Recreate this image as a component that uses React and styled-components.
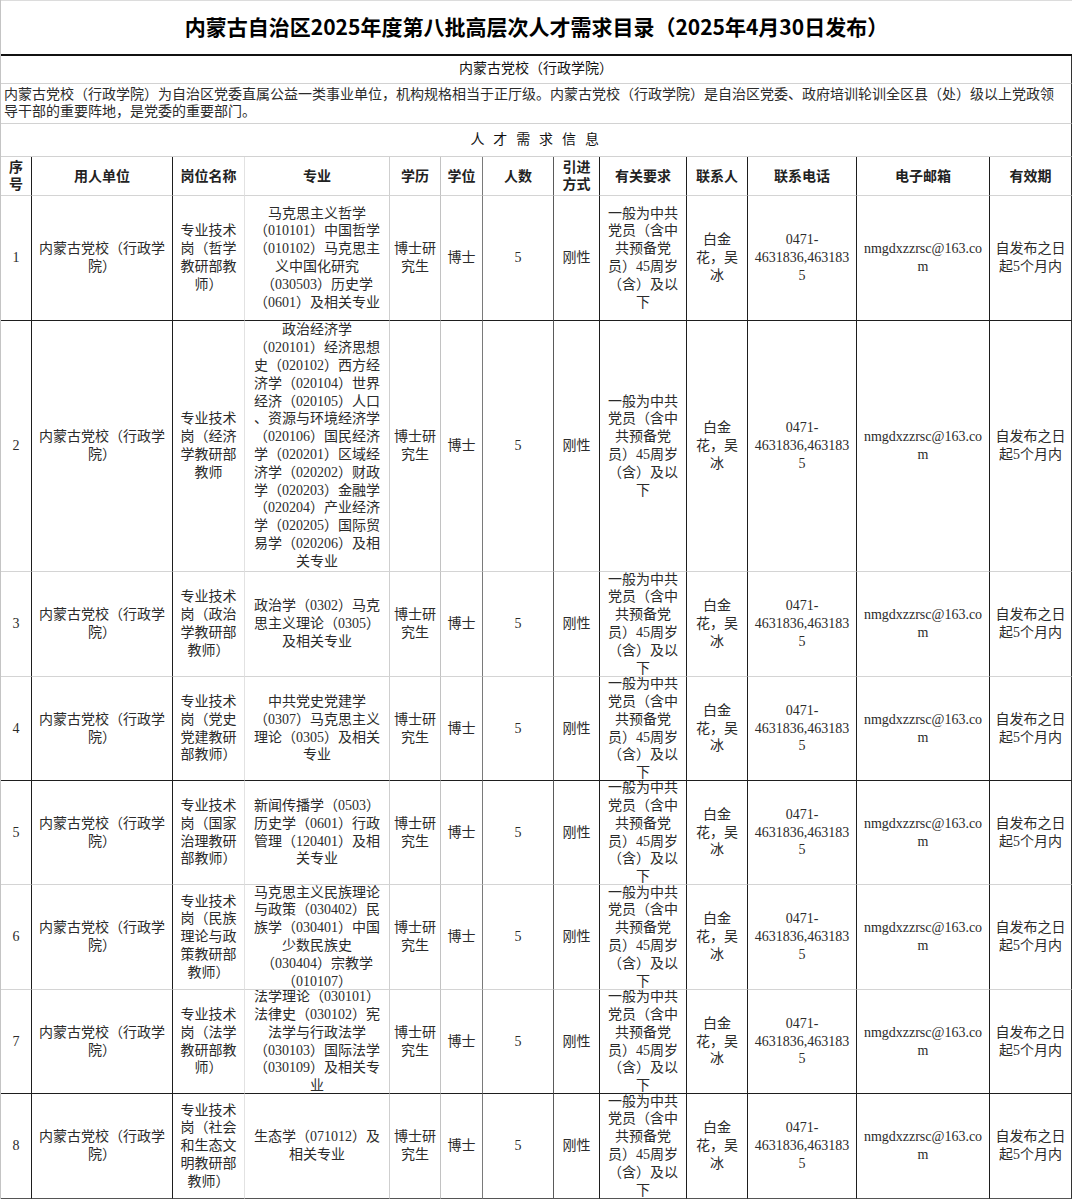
import React from 'react';
import styled, { createGlobalStyle } from 'styled-components';

const GlobalStyle = createGlobalStyle`
	body {
		margin: 0;
		background: #ffffff;
	}
	* {
		box-sizing: border-box;
	}
`;

const FONT = `"Liberation Serif", "Noto Sans CJK SC", serif`;

const Sheet = styled.div`
	width: 1072px;
	border-left: 1px solid #c4c4c4;
	font-family: ${FONT};
	font-size: 14px;
	color: #2b2b2b;
`;

const TitleRow = styled.div`
	height: 56px;
	display: flex;
	align-items: center;
	justify-content: center;
	padding-bottom: 3px;
	border-top: 1px solid #dcdcdc;
	border-bottom: 2px solid #111;
	font-family: "Noto Sans CJK SC", "Liberation Sans", sans-serif;
	font-weight: bold;
	font-size: 21px;
	color: #000;
`;

const Banner = styled.div`
	height: ${props => props.$h}px;
	display: flex;
	align-items: center;
	justify-content: ${props => (props.$left ? 'flex-start' : 'center')};
	padding: 0 ${props => (props.$left ? '3px' : '0')};
	border-right: 1px solid #333;
	border-bottom: 1px solid #d2d2d2;
	line-height: 16.5px;
	letter-spacing: ${props => props.$spacing || 0};
	color: ${props => (props.$dark ? '#111' : '#2b2b2b')};
	white-space: pre;
`;

const Grid = styled.div`
	display: grid;
	grid-template-columns: 31px 141px 72px 145px 51px 42px 71px 46px 87px 61px 109px 133px 82px;
	grid-template-rows: 39px 125px 251px 105px 104px 104px 105px 104px 105px;
`;

const Cell = styled.div`
	display: flex;
	align-items: center;
	justify-content: center;
	overflow: hidden;
	text-align: center;
	white-space: pre;
	line-height: 17.8px;
	border-right: 1px solid ${props => props.$line};
	border-bottom: 1px solid ${props => props.$bottom};
`;

const HeadCell = styled(Cell)`
	font-weight: bold;
	color: #222;
	line-height: 17px;
`;

const DARK = '#1e1e1e';
const LIGHT = '#d4d4d4';

const COLS = [
	{ title: '序\n号', line: DARK },
	{ title: '用人单位', line: DARK },
	{ title: '岗位名称', line: '#e2e2e2' },
	{ title: '专业', line: '#cfcfcf' },
	{ title: '学历', line: '#c2c2c2' },
	{ title: '学位', line: '#7a7a7a' },
	{ title: '人数', line: '#5a5a5a' },
	{ title: '引进\n方式', line: DARK },
	{ title: '有关要求', line: DARK },
	{ title: '联系人', line: DARK },
	{ title: '联系电话', line: DARK },
	{ title: '电子邮箱', line: DARK },
	{ title: '有效期', line: '#333' }
];

const UNIT = '内蒙古党校（行政学\n院）';
const REQUIRE = '一般为中共\n党员（含中\n共预备党\n员）45周岁\n（含）及以\n下';
const CONTACT = '白金\n花，吴\n冰';
const PHONE = '0471-\n4631836,463183\n5';
const EMAIL = 'nmgdxzzrsc@163.co\nm';
const VALID = '自发布之日\n起5个月内';

const JOBS = [
	{
		post: '专业技术\n岗（哲学\n教研部教\n师）',
		major: '马克思主义哲学\n（010101）中国哲学\n（010102）马克思主\n义中国化研究\n（030503）历史学\n（0601）及相关专业',
		bottom: DARK
	},
	{
		post: '专业技术\n岗（经济\n学教研部\n教师',
		major:
			'政治经济学\n（020101）经济思想\n史（020102）西方经\n济学（020104）世界\n经济（020105）人口\n、资源与环境经济学\n（020106）国民经济\n学（020201）区域经\n济学（020202）财政\n学（020203）金融学\n（020204）产业经济\n学（020205）国际贸\n易学（020206）及相\n关专业',
		bottom: LIGHT
	},
	{
		post: '专业技术\n岗（政治\n学教研部\n教师）',
		major: '政治学（0302）马克\n思主义理论（0305）\n及相关专业',
		bottom: LIGHT
	},
	{
		post: '专业技术\n岗（党史\n党建教研\n部教师）',
		major: '中共党史党建学\n（0307）马克思主义\n理论（0305）及相关\n专业',
		bottom: DARK
	},
	{
		post: '专业技术\n岗（国家\n治理教研\n部教师）',
		major: '新闻传播学（0503）\n历史学（0601）行政\n管理（120401）及相\n关专业',
		bottom: LIGHT
	},
	{
		post: '专业技术\n岗（民族\n理论与政\n策教研部\n教师）',
		major: '马克思主义民族理论\n与政策（030402）民\n族学（030401）中国\n少数民族史\n（030404）宗教学\n（010107）',
		bottom: LIGHT
	},
	{
		post: '专业技术\n岗（法学\n教研部教\n师）',
		major: '法学理论（030101）\n法律史（030102）宪\n法学与行政法学\n（030103）国际法学\n（030109）及相关专\n业',
		bottom: DARK
	},
	{
		post: '专业技术\n岗（社会\n和生态文\n明教研部\n教师）',
		major: '生态学（071012）及\n相关专业',
		bottom: '#555'
	}
];

const INTRO =
	'内蒙古党校（行政学院）为自治区党委直属公益一类事业单位，机构规格相当于正厅级。内蒙古党校（行政学院）是自治区党委、政府培训轮训全区县（处）级以上党政领\n导干部的重要阵地，是党委的重要部门。';

const App = () => {
	const rows = JOBS.map((job, i) => [
		String(i + 1),
		UNIT,
		job.post,
		job.major,
		'博士研\n究生',
		'博士',
		'5',
		'刚性',
		REQUIRE,
		CONTACT,
		PHONE,
		EMAIL,
		VALID
	]);

	return (
		<Sheet>
			<GlobalStyle />
			<TitleRow>内蒙古自治区2025年度第八批高层次人才需求目录（2025年4月30日发布）</TitleRow>
			<Banner $h={28} $dark>
				内蒙古党校（行政学院）
			</Banner>
			<Banner $h={40} $left>
				{INTRO}
			</Banner>
			<Banner $h={33} $dark $spacing="2.7px">
				人 才 需 求 信 息
			</Banner>
			<Grid>
				{COLS.map(col => (
					<HeadCell key={col.title} $line={col.line} $bottom={LIGHT}>
						{col.title}
					</HeadCell>
				))}
				{rows.map((cells, r) =>
					cells.map((text, c) => (
						<Cell key={`${r}-${c}`} $line={COLS[c].line} $bottom={JOBS[r].bottom}>
							{text}
						</Cell>
					))
				)}
			</Grid>
		</Sheet>
	);
};

export default App;
